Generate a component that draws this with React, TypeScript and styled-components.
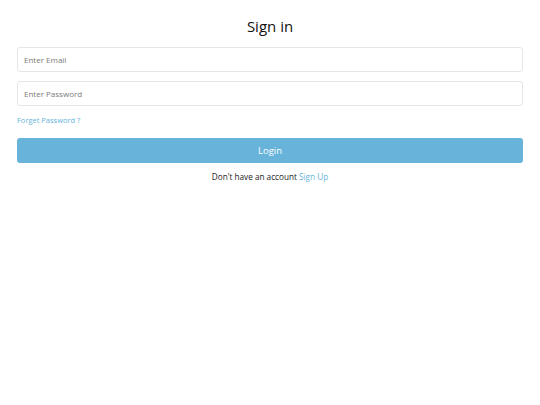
import React from 'react'
import styled, { createGlobalStyle } from 'styled-components'

const Global = createGlobalStyle`
  body {
    margin: 0;
    background: #fff;
    font-family: 'Open Sans', 'Noto Sans', sans-serif;
  }
`

const Page = styled.div`
  padding: 16px 17px;
  display: flex;
  flex-direction: column;
`

const Title = styled.h1`
  margin: 0 0 10px;
  text-align: center;
  font-size: 15px;
  font-weight: 500;
  color: #111;
  line-height: 21px;
`

const Input = styled.input`
  box-sizing: border-box;
  height: 25px;
  width: 100%;
  border: 1px solid #e6e6e6;
  border-radius: 3px;
  padding: 0 6px;
  margin: 0 0 9px;
  font-family: inherit;
  font-size: 8px;
  color: #333;
  outline: none;
  &::placeholder {
    color: #7a7a7a;
  }
`

const Forgot = styled.a`
  font-size: 7.5px;
  color: #67b3da;
  text-decoration: none;
  margin: 0 0 13px;
  line-height: 10px;
`

const Button = styled.button`
  height: 25px;
  width: 100%;
  border: none;
  border-radius: 3px;
  background: #67b3da;
  color: #fff;
  font-family: inherit;
  font-size: 9.5px;
  font-weight: 500;
`

const Footer = styled.p`
  margin: 8px 0 0;
  text-align: center;
  font-size: 8.2px;
  color: #222;
  line-height: 12px;
`

const Link = styled.a`
  color: #67b3da;
  text-decoration: none;
`

export default function App() {
  return (
    <>
      <Global />
      <Page>
        <Title>Sign in</Title>
        <Input placeholder="Enter Email" />
        <Input type="password" placeholder="Enter Password" />
        <Forgot href="#">Forget Password ?</Forgot>
        <Button>Login</Button>
        <Footer>
          Don't have an account <Link href="#">Sign Up</Link>
        </Footer>
      </Page>
    </>
  )
}
